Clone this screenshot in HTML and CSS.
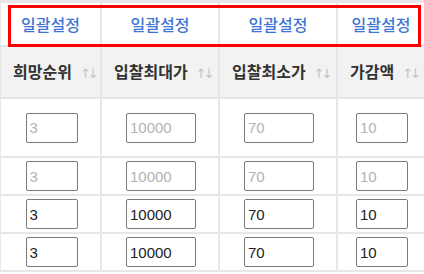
FILE: index.html
```html
<!DOCTYPE html>
<html lang="ko">
<head>
    <meta charset="UTF-8">
    <meta name="viewport" content="width=device-width, initial-scale=1.0">
    <title>입찰 설정</title>
    <link rel="stylesheet" href="styles.css">
</head>
<body>
    <div class="grid-wrap">
        <table class="bid-table">
            <thead>
                <tr class="bulk-row">
                    <th class="col-rank"><a href="#" class="bulk-link">일괄설정</a></th>
                    <th class="col-max"><a href="#" class="bulk-link">일괄설정</a></th>
                    <th class="col-min"><a href="#" class="bulk-link">일괄설정</a></th>
                    <th class="col-step"><a href="#" class="bulk-link">일괄설정</a></th>
                </tr>
                <tr class="head-row">
                    <th>희망순위<span class="sort">↑↓</span></th>
                    <th>입찰최대가<span class="sort">↑↓</span></th>
                    <th>입찰최소가<span class="sort">↑↓</span></th>
                    <th>가감액<span class="sort">↑↓</span></th>
                </tr>
            </thead>
            <tbody>
                <tr class="filter-row">
                    <td><input type="text" class="num short" placeholder="3"></td>
                    <td><input type="text" class="num long" placeholder="10000"></td>
                    <td><input type="text" class="num long" placeholder="70"></td>
                    <td><input type="text" class="num short" placeholder="10"></td>
                </tr>
                <tr>
                    <td><input type="text" class="num short" placeholder="3"></td>
                    <td><input type="text" class="num long" placeholder="10000"></td>
                    <td><input type="text" class="num long" placeholder="70"></td>
                    <td><input type="text" class="num short" placeholder="10"></td>
                </tr>
                <tr>
                    <td><input type="text" class="num short" value="3"></td>
                    <td><input type="text" class="num long" value="10000"></td>
                    <td><input type="text" class="num long" value="70"></td>
                    <td><input type="text" class="num short" value="10"></td>
                </tr>
                <tr>
                    <td><input type="text" class="num short" value="3"></td>
                    <td><input type="text" class="num long" value="10000"></td>
                    <td><input type="text" class="num long" value="70"></td>
                    <td><input type="text" class="num short" value="10"></td>
                </tr>
            </tbody>
        </table>
        <div class="highlight"></div>
    </div>
</body>
</html>
```

FILE: styles.css
```css
body {
    margin: 0;
    padding: 0;
    background: #fff;
    font-family: "Noto Sans CJK KR", "Liberation Sans", sans-serif;
}
.grid-wrap {
    position: relative;
    border-top: 3px solid #e8e8e8;
}
.bid-table {
    width: 424px;
    table-layout: fixed;
    border-collapse: separate;
    border-spacing: 0;
    border-left: 1px solid #e6e6e6;
}
.bid-table th,
.bid-table td {
    box-sizing: border-box;
    padding: 0;
    border-right: 2px solid #e6e6e6;
    border-bottom: 2px solid #e6e6e6;
    vertical-align: middle;
}
.bid-table th:last-child,
.bid-table td:last-child {
    border-right: none;
}
.col-rank {
    width: 101px;
}
.col-max,
.col-min {
    width: 118px;
}
.bulk-row th {
    height: 44px;
    text-align: center;
    font-weight: normal;
    background: #fff;
}
.bulk-link {
    color: #3f76d2;
    font-size: 16px;
    line-height: 20px;
    font-weight: 500;
    text-decoration: none;
}
.head-row th {
    height: 52px;
    padding-left: 12px;
    text-align: left;
    font-size: 16px;
    line-height: 20px;
    font-weight: bold;
    color: #333;
    background: #f2f2f2;
    white-space: nowrap;
}
.sort {
    margin-left: 8px;
    font-family: "DejaVu Sans", sans-serif;
    font-size: 13px;
    font-weight: normal;
    letter-spacing: -3px;
    color: #c4c4c4;
    vertical-align: 0;
}
.bid-table td {
    height: 38px;
    text-align: center;
}
.filter-row td {
    height: 59px;
}
.num {
    box-sizing: border-box;
    height: 30px;
    margin-left: 2px;
    padding: 0 3px;
    border: 1px solid #7a7a7a;
    border-radius: 2px;
    font-family: "Liberation Sans", sans-serif;
    font-size: 15px;
    color: #222;
    vertical-align: middle;
}
.num::placeholder {
    color: #b3b3b3;
}
.num.short {
    width: 52px;
}
.num.long {
    width: 70px;
}
.highlight {
    position: absolute;
    left: 8px;
    top: 2px;
    width: 413px;
    height: 42px;
    box-sizing: border-box;
    border: 3px solid #ff0000;
}
```
